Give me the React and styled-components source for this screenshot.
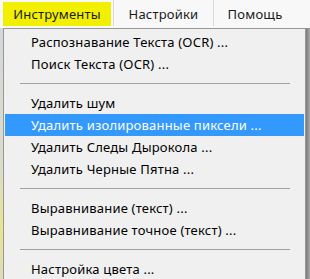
import React from "react";
import styled, { createGlobalStyle } from "styled-components";

const GlobalStyle = createGlobalStyle`
  html, body {
    margin: 0;
    padding: 0;
    background: #f0f0f0;
    overflow: hidden;
  }
  body {
    font-family: "Noto Sans", "Open Sans", sans-serif;
    font-size: 13px;
    color: #000;
  }
`;

const menus = [
  { title: "Инструменты", width: 108, active: true },
  { title: "Настройки", width: 95 },
  { title: "Помощь", width: 78 },
];

const items = [
  { label: "Распознавание Текста (OCR) ..." },
  { label: "Поиск Текста (OCR) ..." },
  { sep: true },
  { label: "Удалить шум" },
  { label: "Удалить изолированные пиксели ...", hover: true },
  { label: "Удалить Следы Дырокола ..." },
  { label: "Удалить Черные Пятна ..." },
  { sep: true },
  { label: "Выравнивание (текст) ..." },
  { label: "Выравнивание точное (текст) ..." },
  { sep: true },
  { label: "Настройка цвета ..." },
];

const App = () => {
  return (
    <>
      <GlobalStyle />
      <Screen>
        <MenuBar>
          {menus.map((m, i) => (
            <React.Fragment key={m.title}>
              <MenuTitle $active={m.active} $width={m.width}>
                {m.title}
              </MenuTitle>
              {i < menus.length - 1 && <BarDivider />}
            </React.Fragment>
          ))}
        </MenuBar>
        <Body>
          <Backdrop />
          <Dropdown>
            {items.map((item, index) =>
              item.sep ? (
                <Separator key={index} />
              ) : (
                <Item key={index} $hover={item.hover}>
                  {item.label}
                </Item>
              )
            )}
          </Dropdown>
          <Shadow />
        </Body>
      </Screen>
    </>
  );
};

export default App;

const Screen = styled.div`
  width: 310px;
  height: 279px;
  display: flex;
  flex-direction: column;
  overflow: hidden;
  background: #f0f0f0;
`;

const MenuBar = styled.div`
  display: flex;
  align-items: stretch;
  gap: 2px;
  height: 28px;
  padding: 2px 0 0 3px;
  box-sizing: border-box;
  background: #f8f8f8;
`;

const MenuTitle = styled.div`
  width: ${(p) => p.$width}px;
  height: 24px;
  display: flex;
  align-items: center;
  justify-content: center;
  font-size: 13px;
  letter-spacing: 0.2px;
  color: #1a1a1a;
  background: ${(p) => (p.$active ? "#f2f000" : "transparent")};
`;

const BarDivider = styled.div`
  width: 1px;
  height: 26px;
  margin-top: -2px;
  background: #d8d8d8;
`;

const Body = styled.div`
  flex: 1;
  display: flex;
  min-height: 0;
`;

const Backdrop = styled.div`
  width: 3px;
  background: linear-gradient(#d4d8dc, #dadcc8 55%, #e6e690 80%, #dcdcb8);
`;

const Dropdown = styled.div`
  width: 303px;
  background: #f0f0f0;
  border: 1px solid #979797;
  border-bottom: none;
  padding: 2px 1px 0 1px;
  box-sizing: border-box;
`;

const Item = styled.div`
  height: 22px;
  display: flex;
  align-items: center;
  padding-left: 26px;
  font-size: 13px;
  letter-spacing: 0.2px;
  white-space: nowrap;
  color: ${(p) => (p.$hover ? "#ffffff" : "#000000")};
  background: ${(p) => (p.$hover ? "#3399ff" : "transparent")};
`;

const Separator = styled.div`
  height: 1px;
  margin: 8px 14px 8px 15px;
  background: #a0a0a0;
`;

const Shadow = styled.div`
  width: 4px;
  background: linear-gradient(to right, #7c7c7c, #a8a8a8);
`;
